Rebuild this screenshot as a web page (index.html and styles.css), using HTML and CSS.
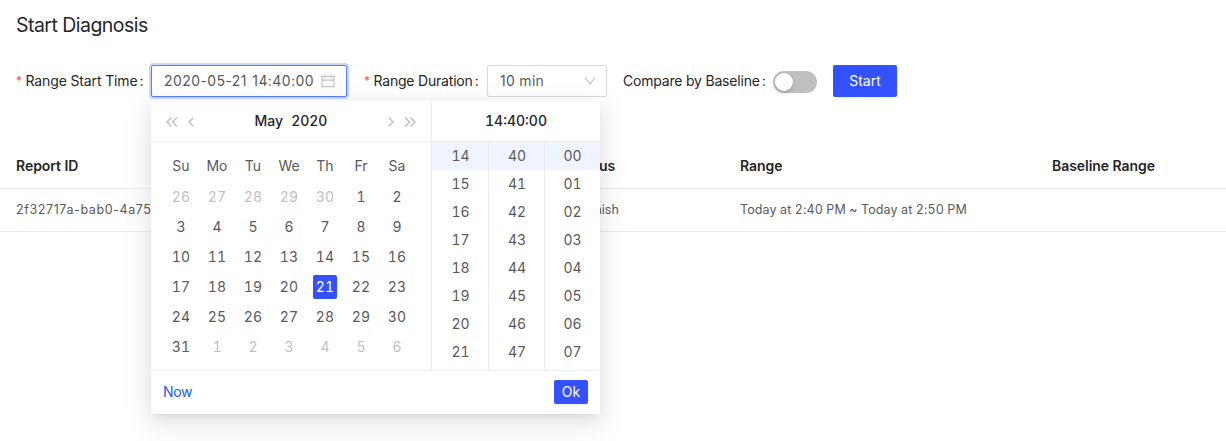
FILE: index.html
```html
<!DOCTYPE html>
<html lang="en">
<head>
<meta charset="utf-8">
<title>Start Diagnosis</title>
<link rel="stylesheet" href="styles.css">
</head>
<body>
<main class="page">
  <h1 class="title"><span>Start Diagnosis</span></h1>
  <form class="form">
    <div class="field field-start">
      <label class="label required"><span class="label-text">Range Start Time</span></label>
      <div class="picker">
        <div class="input input-focused">
          <span class="input-date">2020-05-21 14:40:00</span>
          <svg class="calendar-icon" viewBox="0 0 14 14"><path d="M1 2.5h12v10.2H1zM1 6.2h12M4.2 .8v3M9.8 .8v3"/></svg>
        </div>
        <section class="popup">
          <div class="popup-body">
            <div class="calendar">
              <div class="popup-head calendar-head">
                <div class="nav">
                  <svg class="double" viewBox="0 0 12 10"><path d="M5.500 .5 1 5l4.500 4.500M11 .5 6.500 5 11 9.500"/></svg>
                  <svg class="single" viewBox="0 0 6 10"><path d="M5.300 .7 1 5l4.300 4.300"/></svg>
                </div>
                <div class="heading"><span>May</span><span class="digits">2020</span></div>
                <div class="nav nav-next">
                  <svg class="single" viewBox="0 0 6 10"><path d="M.7 .7 5 5 .7 9.300"/></svg>
                  <svg class="double" viewBox="0 0 12 10"><path d="M1 .5 5.500 5 1 9.500M6.500 .5 11 5 6.500 9.500"/></svg>
                </div>
              </div>
              <div class="weekdays"><span>Su</span><span>Mo</span><span>Tu</span><span>We</span><span>Th</span><span>Fr</span><span>Sa</span></div>
              <div class="days">
                <span class="muted">26</span><span class="muted">27</span><span class="muted">28</span><span class="muted">29</span><span class="muted">30</span><span>1</span><span>2</span>
                <span>3</span><span>4</span><span>5</span><span>6</span><span>7</span><span>8</span><span>9</span>
                <span>10</span><span>11</span><span>12</span><span>13</span><span>14</span><span>15</span><span>16</span>
                <span>17</span><span>18</span><span>19</span><span>20</span><span class="selected">21</span><span>22</span><span>23</span>
                <span>24</span><span>25</span><span>26</span><span>27</span><span>28</span><span>29</span><span>30</span>
                <span>31</span><span class="muted">1</span><span class="muted">2</span><span class="muted">3</span><span class="muted">4</span><span class="muted">5</span><span class="muted">6</span>
              </div>
            </div>
            <div class="time">
              <div class="popup-head"><span class="digits">14:40:00</span></div>
              <div class="time-columns">
                <div class="time-column"><span class="active">14</span><span>15</span><span>16</span><span>17</span><span>18</span><span>19</span><span>20</span><span>21</span></div>
                <div class="time-column"><span class="active">40</span><span>41</span><span>42</span><span>43</span><span>44</span><span>45</span><span>46</span><span>47</span></div>
                <div class="time-column"><span class="active">00</span><span>01</span><span>02</span><span>03</span><span>04</span><span>05</span><span>06</span><span>07</span></div>
              </div>
            </div>
          </div>
          <div class="popup-foot"><a class="now">Now</a><button class="button button-small" type="button">Ok</button></div>
        </section>
      </div>
    </div>
    <div class="field field-duration">
      <label class="label required"><span class="label-text">Range Duration</span></label>
      <div class="input select"><span class="select-value">10 min</span>
        <svg class="chevron" viewBox="0 0 12 10"><path d="M1 1.500 6 8l5-6.500"/></svg>
      </div>
    </div>
    <div class="field field-baseline">
      <label class="label"><span class="label-text">Compare by Baseline</span></label>
      <span class="switch"></span>
    </div>
    <button class="button" type="button">Start</button>
  </form>
  <div class="table">
    <div class="row row-head"><span>Report ID</span><span>Status</span><span>Range</span><span>Baseline Range</span></div>
    <div class="row"><span class="cell-id">2f32717a-bab0-4a75</span><span class="cell-status">Finish</span><span class="cell-range">Today at 2:40 PM ~ Today at 2:50 PM</span><span></span></div>
  </div>
</main>
</body>
</html>
```
FILE: styles.css
```css
* { box-sizing: border-box; }
body {
  margin: 0;
  background: #fff;
  color: #262626;
  font: 14px/22px Inter, Roboto, sans-serif;
  overflow: hidden;
}
.page { height: 441px; }
.title { margin: 0; padding: 11px 16px 0; height: 65px; font-size: 19.5px; font-weight: 400; line-height: 28px; letter-spacing: -0.53px; }
.digits { font-feature-settings: "tnum"; }
.form { display: flex; height: 32px; padding-left: 16px; }
.field { display: flex; align-items: center; height: 32px; }
.field-start { width: 348px; }
.field-duration { width: 259px; }
.field-baseline { width: 210px; }
.label { display: flex; align-items: center; flex: none; white-space: nowrap; }
.label-text { letter-spacing: -0.2px; }
.field-start .label { width: 135px; }
.field-duration .label { width: 123px; }
.field-baseline .label { width: 150px; }
.label::after { content: ":"; margin-left: 2px; }
.field-start .label-text { letter-spacing: -0.13px; }
.required::before { content: "*"; width: 9.5px; color: #ff4d4f; font-size: 12px; line-height: 14px; }
.input { display: flex; align-items: center; justify-content: space-between; height: 32px; padding: 0 12px; border: 1px solid #d9d9d9; border-radius: 2px; background: #fff; color: #595959; }
.input-date { letter-spacing: .42px; word-spacing: 1px; white-space: nowrap; }
.select-value { letter-spacing: .3px; }
.input-focused { width: 196px; padding-right: 11px; border-color: #597eff; box-shadow: 0 0 0 2px #c9d7ff; }
.select { width: 120px; padding-right: 10px; }
svg { display: block; flex: none; fill: none; stroke: #bfbfbf; stroke-width: 1.2; }
.calendar-icon { width: 14px; height: 14px; }
.chevron { width: 12px; height: 10px; }
.switch { display: block; width: 44px; height: 22px; margin-top: 2px; padding: 2px; border-radius: 11px; background: #bfbfbf; }
.switch::before { content: ""; display: block; width: 18px; height: 18px; border-radius: 50%; background: #fff; box-shadow: 0 2px 4px rgba(0, 35, 11, .2); }
.button { width: 64px; height: 32px; padding: 0; border: 0; border-radius: 2px; background: #3351ff; color: #fff; font: inherit; line-height: 32px; box-shadow: 0 2px 0 rgba(0, 0, 0, .04); }
.button-small { width: 34px; height: 24px; line-height: 24px; }

.picker { position: relative; }
.popup {
  position: absolute; z-index: 2; top: 36px; left: 0; width: 449px; height: 313px; background: #fff;
  box-shadow: 0 3px 6px -4px rgba(0, 0, 0, .12), 0 6px 16px rgba(0, 0, 0, .08), 0 9px 28px 8px rgba(0, 0, 0, .05);
}
.popup-body { display: flex; height: 270px; border-bottom: 1px solid #ececec; }
.calendar { width: 281px; border-right: 1px solid #ececec; }
.time { flex: 1; }
.popup-head { display: flex; align-items: center; justify-content: center; height: 41px; border-bottom: 1px solid #ececec; font-weight: 500; color: #262626; }
.calendar-head { justify-content: space-between; padding: 0 14px; }
.heading { display: flex; gap: 8px; }
.nav { display: flex; align-items: center; gap: 10px; width: 50px; padding: 2px 0 0 1px; }
.nav svg { stroke-width: 1.5; }
.nav-next { justify-content: flex-end; padding: 2px 1px 0 0; }
.double { width: 12px; height: 10px; }
.single { width: 6px; height: 10px; }
.weekdays, .days { display: grid; grid-template-columns: repeat(7, 36px); margin-left: 12px; text-align: center; justify-items: center; color: #595959; }
.weekdays { padding-top: 12px; height: 42px; line-height: 24px; }
.days { grid-auto-rows: 30px; }
.days span { width: 24px; height: 24px; line-height: 24px; margin-top: 1px; font-feature-settings: "tnum"; letter-spacing: .1px; white-space: nowrap; }
.days .muted { color: #bfbfbf; }
.days .selected { background: #3351ff; color: #fff; border-radius: 2px; }
.time-columns { display: grid; grid-template-columns: 57px 56px 55px; height: 228px; }
.time-column { display: flex; flex-direction: column; text-align: center; color: #595959; }
.time-column + .time-column { border-left: 1px solid #ececec; margin-left: -1px; }
.time-column span { height: 28px; line-height: 28px; font-feature-settings: "tnum"; }
.time-column .active { background: #f0f4ff; }
.popup-foot { display: flex; align-items: center; justify-content: space-between; height: 42px; padding: 0 12px; }
.now { color: #2457f5; letter-spacing: -0.3px; }

.table { margin-top: 48px; }
.row { display: grid; grid-template-columns: 556px 168px 312px 1fr; align-items: center; height: 43px; padding-left: 16px; border-bottom: 1px solid #ececec; color: #595959; font-size: 12.5px; }
.row-head { height: 44px; padding-bottom: 2px; color: #262626; font-size: 14px; font-weight: 600; letter-spacing: -0.05px; }
.cell-id { letter-spacing: .6px; }
.cell-status { padding-left: 12px; }
.cell-range { letter-spacing: .1px; font-feature-settings: "tnum"; }
```
